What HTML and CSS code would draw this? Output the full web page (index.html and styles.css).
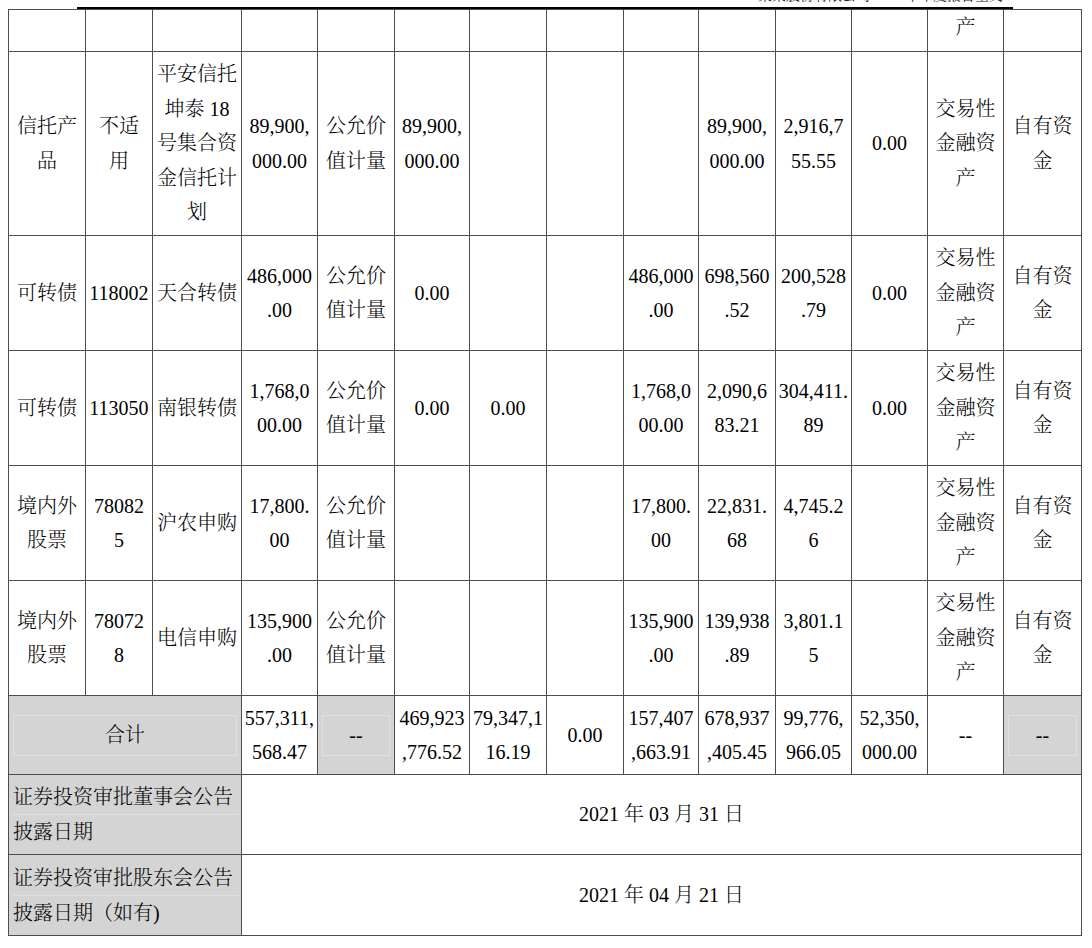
FILE: index.html
```html
<!DOCTYPE html>
<html lang="zh-CN">
<head>
<meta charset="utf-8">
<title>证券投资情况</title>
<link rel="stylesheet" href="styles.css">
</head>
<body>
<div class="page-head"><div class="page-head-text">某某股份有限公司 2021 年年度报告全文</div></div>
<table class="tbl">
  <colgroup>
    <col class="w1"><col class="w2"><col class="w3"><col class="w4"><col class="w5"><col class="w6"><col class="w7">
    <col class="w8"><col class="w9"><col class="w10"><col class="w11"><col class="w12"><col class="w13"><col class="w14">
  </colgroup>
  <tr class="r-cont">
    <td></td><td></td><td></td><td></td><td></td><td></td><td></td>
    <td></td><td></td><td></td><td></td><td></td><td class="cont">产</td><td></td>
  </tr>
  <tr class="r-five">
    <td>信托产<br>品</td><td>不适<br>用</td><td>平安信托<br>坤泰 18<br>号集合资<br>金信托计<br>划</td>
    <td>89,900,<br>000.00</td><td>公允价<br>值计量</td><td>89,900,<br>000.00</td><td></td>
    <td></td><td></td><td>89,900,<br>000.00</td><td>2,916,7<br>55.55</td><td>0.00</td>
    <td>交易性<br>金融资<br>产</td><td>自有资<br>金</td>
  </tr>
  <tr class="r-three">
    <td>可转债</td><td>118002</td><td>天合转债</td>
    <td>486,000<br>.00</td><td>公允价<br>值计量</td><td>0.00</td><td></td>
    <td></td><td>486,000<br>.00</td><td>698,560<br>.52</td><td>200,528<br>.79</td><td>0.00</td>
    <td>交易性<br>金融资<br>产</td><td>自有资<br>金</td>
  </tr>
  <tr class="r-three">
    <td>可转债</td><td>113050</td><td>南银转债</td>
    <td>1,768,0<br>00.00</td><td>公允价<br>值计量</td><td>0.00</td><td>0.00</td>
    <td></td><td>1,768,0<br>00.00</td><td>2,090,6<br>83.21</td><td>304,411.<br>89</td><td>0.00</td>
    <td>交易性<br>金融资<br>产</td><td>自有资<br>金</td>
  </tr>
  <tr class="r-three">
    <td>境内外<br>股票</td><td>78082<br>5</td><td>沪农申购</td>
    <td>17,800.<br>00</td><td>公允价<br>值计量</td><td></td><td></td>
    <td></td><td>17,800.<br>00</td><td>22,831.<br>68</td><td>4,745.2<br>6</td><td></td>
    <td>交易性<br>金融资<br>产</td><td>自有资<br>金</td>
  </tr>
  <tr class="r-three">
    <td>境内外<br>股票</td><td>78072<br>8</td><td>电信申购</td>
    <td>135,900<br>.00</td><td>公允价<br>值计量</td><td></td><td></td>
    <td></td><td>135,900<br>.00</td><td>139,938<br>.89</td><td>3,801.1<br>5</td><td></td>
    <td>交易性<br>金融资<br>产</td><td>自有资<br>金</td>
  </tr>
  <tr class="r-total">
    <td colspan="3" class="shade"><span class="box">合计</span></td>
    <td>557,311,<br>568.47</td><td class="shade"><span class="box">--</span></td><td>469,923<br>,776.52</td><td>79,347,1<br>16.19</td>
    <td>0.00</td><td>157,407<br>,663.91</td><td>678,937<br>,405.45</td><td>99,776,<br>966.05</td><td>52,350,<br>000.00</td>
    <td>--</td><td class="shade"><span class="box">--</span></td>
  </tr>
  <tr class="r-date1">
    <td colspan="3" class="shade label"><span class="ln first">证券投资审批董事会公告</span><span class="ln">披露日期</span></td>
    <td colspan="11">2021 年 03 月 31 日</td>
  </tr>
  <tr class="r-date2">
    <td colspan="3" class="shade label"><span class="ln first">证券投资审批股东会公告</span><span class="ln">披露日期（如有)</span></td>
    <td colspan="11">2021 年 04 月 21 日</td>
  </tr>
</table>
</body>
</html>
```

FILE: styles.css
```css
html, body {
  background: #ffffff;
}

body {
  margin: 0 0 0 8px;
  color: #000000;
  font-family: "Liberation Serif", "Noto Serif CJK SC", "Noto Sans CJK SC", serif;
}

.page-head {
  margin-left: 69px;
  width: 936px;
  height: 7px;
  border-bottom: 2px solid #000000;
  overflow: hidden;
}

.page-head-text {
  margin-top: -11px;
  padding-right: 10px;
  text-align: right;
  font-size: 14px;
  line-height: 14px;
  color: #222222;
}

.tbl {
  border-collapse: collapse;
  table-layout: fixed;
  width: 1074px;
  font-size: 20px;
  line-height: 34.5px;
  font-weight: 300;
}

.tbl td {
  border: 1px solid #4d4d4d;
  padding: 0 2px;
  text-align: center;
  vertical-align: middle;
  white-space: nowrap;
  overflow: hidden;
}

.w1 { width: 77px; }
.w2 { width: 67px; }
.w3 { width: 89px; }
.w4 { width: 76px; }
.w5 { width: 77px; }
.w6 { width: 75px; }
.w7 { width: 77px; }
.w8 { width: 77px; }
.w9 { width: 75px; }
.w10 { width: 77px; }
.w11 { width: 76px; }
.w12 { width: 76px; }
.w13 { width: 76px; }
.w14 { width: 78px; }

.r-cont { height: 42px; }
.r-five { height: 184px; }
.r-three { height: 115px; }
.r-total { height: 79px; }
.r-date1 { height: 80px; }
.r-date2 { height: 81px; }

.tbl td.cont {
  vertical-align: top;
  line-height: 34px;
}

.tbl td.shade {
  background: #d4d4d4;
}

.box {
  display: block;
  margin: 0 2px;
  line-height: 39px;
  border: 1px solid #e0e0e0;
}

.tbl td.label {
  text-align: left;
  padding-left: 4px;
}

.ln {
  display: block;
  line-height: 34px;
}

.ln.first {
  border-bottom: 1px solid #e0e0e0;
}
```
